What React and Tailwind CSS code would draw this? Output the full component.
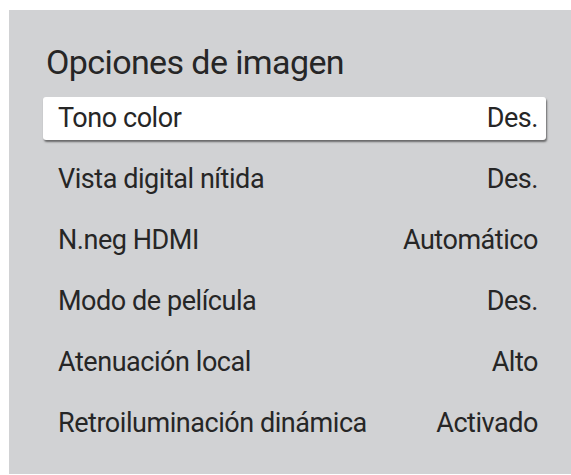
const rows = [
  { label: 'Tono color', value: 'Des.', selected: true },
  { label: 'Vista digital nítida', value: 'Des.' },
  { label: 'N.neg HDMI', value: 'Automático' },
  { label: 'Modo de película', value: 'Des.' },
  { label: 'Atenuación local', value: 'Alto' },
  { label: 'Retroiluminación dinámica', value: 'Activado' },
];

export default function App() {
  return (
    <div className="h-[475px] w-full bg-white pl-[9px] pt-[10px] font-['Roboto',sans-serif] text-[#262626]">
      <div className="h-[464px] bg-[#d1d2d4] pl-[34px] pr-[25px] pt-[32px]">
        <h1 className="pl-[3px] text-[34px] leading-[40px] font-normal tracking-[-0.6px]">Opciones de imagen</h1>
        <div className="mt-[15px] flex flex-col gap-[18px]">
          {rows.map((r) => (
            <div
              key={r.label}
              className={`flex h-[43px] items-center justify-between pl-[15px] pr-[8px] text-[27px] leading-none tracking-[-0.45px] ${
                r.selected ? 'rounded-[3px] bg-white shadow-[1px_2px_2px_rgba(0,0,0,0.5)]' : ''
              }`}
            >
              <span>{r.label}</span>
              <span>{r.value}</span>
            </div>
          ))}
        </div>
      </div>
    </div>
  );
}
